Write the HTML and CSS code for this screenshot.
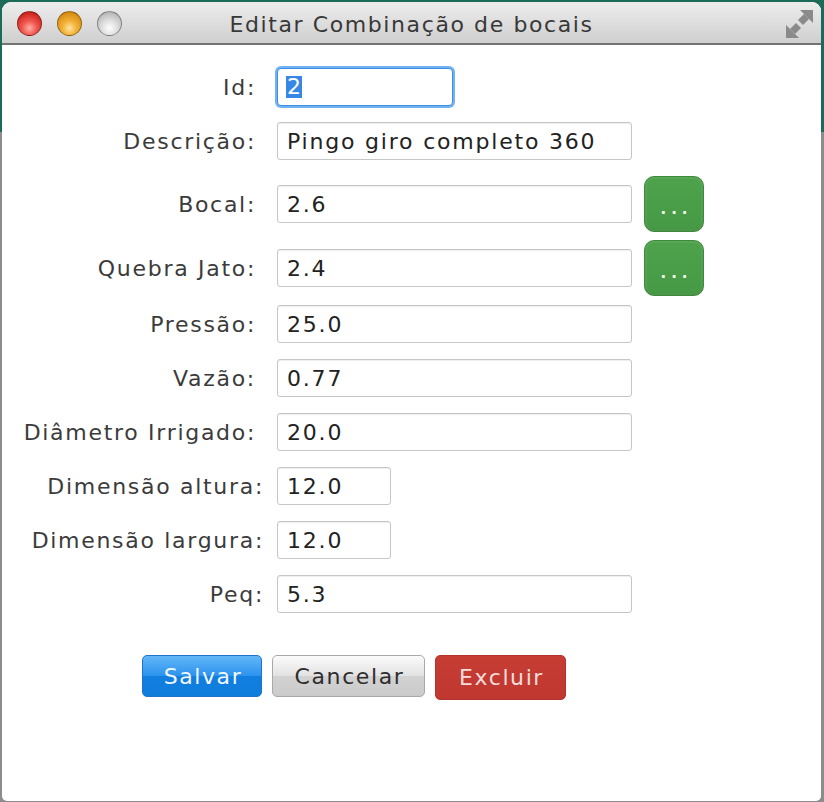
FILE: index.html
```html
<!DOCTYPE html>
<html lang="pt">
<head>
<meta charset="utf-8">
<title>Editar Combinação de bocais</title>
<link rel="stylesheet" href="styles.css">
</head>
<body>
<div class="window">
  <div class="titlebar">
    <div class="lights">
      <span class="light red"></span>
      <span class="light yellow"></span>
      <span class="light grey"></span>
    </div>
    <div class="title">Editar Combinação de bocais</div>
    <svg class="fullscreen" width="29" height="28" viewBox="0 0 29 28">
      <g fill="#8a8a8a">
        <polygon points="28,0 28,13 15,0"/>
        <polygon points="19,4 24,9 18,15 13,10"/>
        <polygon points="1,28 1,15 14,28"/>
        <polygon points="5,19 10,24 16,18 11,13"/>
      </g>
    </svg>
  </div>
  <div class="content">
    <div class="form">
      <div class="row"><span class="lbl">Id:</span><div class="field field-id focused"><span class="sel">2</span></div></div>
      <div class="row"><span class="lbl">Descrição:</span><div class="field field-long">Pingo giro completo 360</div></div>
      <div class="row btn-row"><span class="lbl">Bocal:</span><div class="field field-long">2.6</div><button class="pick">...</button></div>
      <div class="row btn-row"><span class="lbl">Quebra Jato:</span><div class="field field-long">2.4</div><button class="pick">...</button></div>
      <div class="row"><span class="lbl">Pressão:</span><div class="field field-long">25.0</div></div>
      <div class="row"><span class="lbl">Vazão:</span><div class="field field-long">0.77</div></div>
      <div class="row"><span class="lbl">Diâmetro Irrigado:</span><div class="field field-long">20.0</div></div>
      <div class="row"><span class="lbl lbl-wide">Dimensão altura:</span><div class="field field-short">12.0</div></div>
      <div class="row"><span class="lbl lbl-wide">Dimensão largura:</span><div class="field field-short">12.0</div></div>
      <div class="row"><span class="lbl lbl-wide">Peq:</span><div class="field field-long">5.3</div></div>
    </div>
    <div class="actions">
      <button class="btn btn-save">Salvar</button>
      <button class="btn btn-cancel">Cancelar</button>
      <button class="btn btn-delete">Excluir</button>
    </div>
  </div>
</div>
</body>
</html>
```

FILE: styles.css
```css
html, body {
  margin: 0;
  padding: 0;
}

body {
  width: 824px;
  height: 802px;
  overflow: hidden;
  background: linear-gradient(#1c6a58 0, #1c6a58 132px, #8c8c8c 132px, #8c8c8c 100%);
  font-family: "DejaVu Sans", "Liberation Sans", sans-serif;
}

.window {
  margin: 2px 3px 0 2px;
  height: 799px;
  background: #ffffff;
  border-radius: 9px 9px 5px 5px;
  overflow: hidden;
  display: flex;
  flex-direction: column;
}

.titlebar {
  flex: none;
  height: 41px;
  background: linear-gradient(#ededed, #cfcfcf);
  border-bottom: 2px solid #747474;
  display: grid;
  grid-template-columns: 1fr auto 1fr;
  align-items: center;
}

.lights {
  display: flex;
  gap: 15px;
  padding-left: 15px;
  padding-top: 1px;
}

.light {
  width: 23px;
  height: 23px;
  border-radius: 50%;
  border: 1px solid rgba(0, 0, 0, 0.35);
}

.red {
  background: radial-gradient(circle at 50% 70%, #ffb0a8 0, #f15a52 35%, #d0261f 75%, #a81812 100%);
}

.yellow {
  background: radial-gradient(circle at 50% 70%, #ffe6a0 0, #f3b23a 35%, #d98e14 75%, #b06f08 100%);
}

.grey {
  background: radial-gradient(circle at 50% 70%, #ffffff 0, #e2e2e2 35%, #bcbcbc 75%, #9a9a9a 100%);
}

.title {
  font-size: 22px;
  letter-spacing: 1.6px;
  color: #383838;
  white-space: nowrap;
  padding-top: 3px;
}

.fullscreen {
  justify-self: end;
  margin-right: 7px;
  margin-top: 2px;
}

.content {
  flex: 1;
  padding-top: 23px;
}

.form {
  display: flex;
  flex-direction: column;
  gap: 16px;
}

.row {
  display: flex;
  align-items: center;
}

.btn-row {
  height: 56px;
}

.btn-row + .btn-row {
  margin-top: -8px;
}

.btn-row + .row:not(.btn-row) {
  margin-top: -7px;
}

.lbl {
  width: 254px;
  padding-right: 6px;
  text-align: right;
  font-size: 22px;
  letter-spacing: 1.7px;
  color: #3b3b3b;
  white-space: nowrap;
}

.lbl-wide {
  padding-right: 0;
  width: 262px;
  margin-right: -2px;
}

.field {
  box-sizing: border-box;
  height: 38px;
  margin-left: 15px;
  padding-left: 9px;
  border: 1px solid #c6c6c6;
  border-radius: 3px;
  background: #ffffff;
  box-shadow: inset 0 1px 1px rgba(0, 0, 0, 0.07);
  font-size: 22px;
  letter-spacing: 1.8px;
  color: #222222;
  display: flex;
  align-items: center;
  white-space: nowrap;
}

.field-long {
  width: 355px;
}

.field-id {
  width: 176px;
}

.field-short {
  width: 114px;
}

.focused {
  border-color: #3b8de8;
  box-shadow: 0 0 0 2px #73b2f2;
  border-radius: 4px;
}

.sel {
  background: #3787e6;
  color: #ffffff;
  line-height: 22px;
  padding: 0 0 0 1px;
  margin-left: -1px;
  letter-spacing: 0;
  width: 15px;
}

.pick {
  box-sizing: border-box;
  width: 60px;
  height: 56px;
  margin-left: 12px;
  border: 1px solid #3c8a3b;
  border-radius: 10px;
  background: linear-gradient(#4fa24c, #479a45);
  box-shadow: inset 0 0 0 2px rgba(255, 255, 255, 0.06), inset 0 -2px 2px rgba(0, 0, 0, 0.08);
  color: #eef7ec;
  font-family: "DejaVu Sans", sans-serif;
  font-size: 15px;
  font-weight: bold;
  letter-spacing: 5px;
  padding: 10px 0 0 5px;
}

.actions {
  display: flex;
  align-items: flex-start;
  gap: 10px;
  margin-top: 42px;
  padding-left: 140px;
}

.btn {
  box-sizing: border-box;
  height: 42px;
  border-radius: 5px;
  font-family: "DejaVu Sans", sans-serif;
  font-size: 22px;
  letter-spacing: 1.6px;
  padding: 0 0 0 2px;
}

.btn-save {
  width: 120px;
  border: 1px solid #1f73cc;
  background: linear-gradient(#63b6f8, #2b93ee 50%, #127fe0 51%, #0f7ddc);
  color: #f2f8ff;
}

.btn-cancel {
  width: 153px;
  border: 1px solid #a9a9a9;
  background: linear-gradient(#fbfbfb, #e2e2e2 50%, #d2d2d2 51%, #cbcbcb);
  color: #2e2e2e;
}

.btn-delete {
  width: 131px;
  height: 45px;
  border: 1px solid #b3322b;
  background: linear-gradient(#c63d34, #bf372f);
  color: #f7dddc;
}
```
